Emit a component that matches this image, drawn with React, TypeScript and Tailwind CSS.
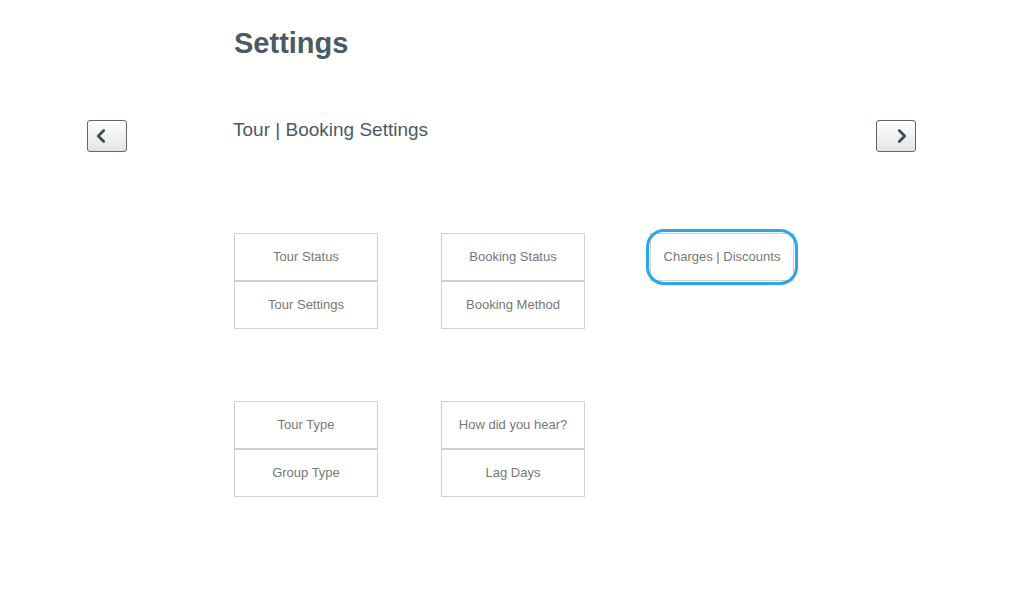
import { ChevronLeft, ChevronRight } from "lucide-react";

const groups = [
  ["Tour Status", "Tour Settings"],
  ["Booking Status", "Booking Method"],
  ["Charges | Discounts"],
  ["Tour Type", "Group Type"],
  ["How did you hear?", "Lag Days"],
];

function Tile({ label, focused }: { label: string; focused?: boolean }) {
  return (
    <button
      type="button"
      className={`relative flex h-[48px] w-[144px] items-center justify-center border border-[#d0d0d0] bg-white text-[13px] text-[#777777] ${
        focused ? "outline-none" : ""
      }`}
    >
      {focused && (
        <span className="pointer-events-none absolute -inset-[5px] rounded-[18px] border-[3px] border-[#2aa5f0]" />
      )}
      {label}
    </button>
  );
}

function Group({ items, focused }: { items: string[]; focused?: boolean }) {
  return (
    <div className="flex w-[144px] flex-col">
      {items.map((label) => (
        <Tile key={label} label={label} focused={focused} />
      ))}
    </div>
  );
}

function NavButton({ dir }: { dir: "left" | "right" }) {
  return (
    <button
      type="button"
      className="flex h-[32px] w-[40px] items-center justify-center rounded-[3px] border border-[#5d6b71] bg-gradient-to-b from-white to-[#e4e4e4] text-[#3e4f57]"
    >
      {dir === "left" ? (
        <ChevronLeft size={22} strokeWidth={3} className="-translate-x-[6px]" />
      ) : (
        <ChevronRight size={22} strokeWidth={3} className="translate-x-[6px]" />
      )}
    </button>
  );
}

export default function App() {
  return (
    <div className="h-[610px] w-full bg-white font-['Liberation_Sans',Arial,sans-serif]">
      {/* Page title */}
      <div className="pl-[234px] pt-[25px]">
        <h1 className="text-[29px] font-bold leading-[36px] text-[#4a5b63]">Settings</h1>
      </div>

      {/* Section header with pager */}
      <div className="mt-[59px] flex items-start pl-[87px] pr-[115px]">
        <NavButton dir="left" />
        <h2 className="ml-[106px] mt-[-2px] flex-1 text-[19px] leading-[24px] text-[#4a5b63]">
          Tour | Booking Settings
        </h2>
        <NavButton dir="right" />
      </div>

      {/* Tiles */}
      <div className="mt-[81px] grid w-fit grid-cols-[144px_144px_144px] gap-x-[63px] gap-y-[72px] pl-[234px]">
        <Group items={groups[0]} />
        <Group items={groups[1]} />
        <div className="ml-[2px]">
          <Group items={groups[2]} focused />
        </div>
        <Group items={groups[3]} />
        <Group items={groups[4]} />
      </div>
    </div>
  );
}
